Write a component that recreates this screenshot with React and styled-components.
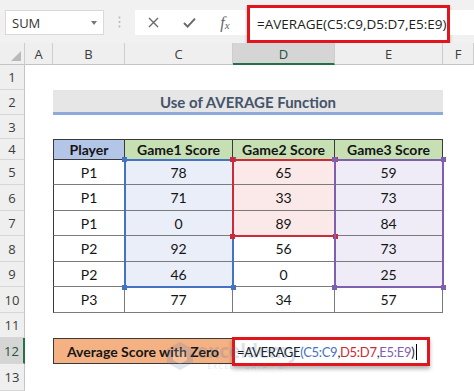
import React from 'react';
import styled, { createGlobalStyle, css } from 'styled-components';

const GlobalStyle = createGlobalStyle`
  html, body { margin: 0; padding: 0; background: #fff; }
  body { width: 474px; height: 391px; overflow: hidden; }
`;

const Window = styled.div`
  width: 474px;
  height: 391px;
  overflow: hidden;
  display: flex;
  flex-direction: column;
  background: #fff;
  font-family: "Open Sans", "Noto Sans", sans-serif;
`;

const Toolbar = styled.div`
  flex: none;
  height: 43px;
  display: flex;
  align-items: flex-start;
  background: #f1f1f1;
`;

const NameBox = styled.div`
  box-sizing: border-box;
  margin: 10px 0 0 5px;
  width: 99px;
  height: 25px;
  background: #fff;
  border: 1px solid #d9d9d9;
  display: flex;
  align-items: center;
  justify-content: space-between;
  padding: 0 6px 0 6px;
  font-size: 13px;
  color: #333;
`;

const Caret = styled.span`
  width: 0;
  height: 0;
  border-left: 3.5px solid transparent;
  border-right: 3.5px solid transparent;
  border-top: 4px solid #777;
`;

const Grip = styled.div`
  width: 31px;
  height: 43px;
  display: flex;
  align-items: center;
  justify-content: center;
`;

const FormulaButtons = styled.div`
  margin-top: 10px;
  width: 112px;
  height: 25px;
  background: #fff;
  display: flex;
`;

const IconSlot = styled.div`
  width: 36px;
  height: 25px;
  display: flex;
  align-items: center;
  justify-content: center;
  color: #6a6a6a;
`;

const Fx = styled.span`
  font-family: "Liberation Serif", "DejaVu Serif", serif;
  font-style: italic;
  font-size: 16px;
  color: #666;
  line-height: 1;
  sub {
    font-size: 11px;
    vertical-align: -1px;
  }
`;

const FormulaInput = styled.div`
  box-sizing: border-box;
  margin-top: 5px;
  width: 203px;
  height: 38px;
  border: 3px solid #e2141c;
  background: #fff;
  box-shadow: 0 2px 3px rgba(0, 0, 0, 0.3);
  display: flex;
  align-items: center;
  padding-left: 7px;
  font-size: 13.5px;
  color: #1d1d1d;
  white-space: nowrap;
`;

const FormulaTail = styled.div`
  flex: 1;
  margin-top: 10px;
  height: 25px;
  background: #fff;
`;

const Sheet = styled.div`
  position: relative;
  flex: 1;
  display: grid;
  grid-template-columns: 25px 28px 72px 108px 102px 108px 1fr;
  grid-template-rows: 22px 25px 25px 24px 21px 25px 26px 25px 26px 25px 26px 25px 26px 27px;
  font-family: Lato, "Open Sans", sans-serif;
`;

const placed = css`
  grid-row: ${(p) => p.$r};
  grid-column: ${(p) => p.$c};
`;

const Corner = styled.div`
  ${placed};
  position: relative;
  background: #efefef;
  border-right: 1px solid #cdcdcd;
  border-bottom: 1px solid #c4c4c4;
  box-sizing: border-box;
  &::after {
    content: '';
    position: absolute;
    right: 3px;
    bottom: 3px;
    width: 0;
    height: 0;
    border-left: 10px solid transparent;
    border-bottom: 10px solid #b9b9b9;
  }
`;

const ColHeader = styled.div`
  ${placed};
  box-sizing: border-box;
  display: flex;
  align-items: center;
  justify-content: center;
  background: ${(p) => (p.$sel ? '#d5d5d5' : '#efefef')};
  border-right: 1px solid #cdcdcd;
  border-bottom: ${(p) => (p.$sel ? '2px solid #217346' : '1px solid #c4c4c4')};
  font-family: "Open Sans", sans-serif;
  font-size: 13px;
  color: ${(p) => (p.$sel ? '#2c4f3b' : '#3c3c3c')};
  padding-top: ${(p) => (p.$sel ? '1px' : '0')};
`;

const RowHeader = styled.div`
  ${placed};
  box-sizing: border-box;
  display: flex;
  align-items: center;
  justify-content: center;
  background: ${(p) => (p.$sel ? '#d5d5d5' : '#efefef')};
  border-right: ${(p) => (p.$sel ? '2px solid #217346' : '1px solid #c4c4c4')};
  border-bottom: 1px solid #d6d6d6;
  font-family: "Open Sans", sans-serif;
  font-size: 13px;
  color: ${(p) => (p.$sel ? '#2c4f3b' : '#3c3c3c')};
`;

const TitleBand = styled.div`
  ${placed};
  box-sizing: border-box;
  display: flex;
  align-items: center;
  justify-content: center;
  background: #e7e6e6;
  border-bottom: 3px solid #8eaadb;
  font-weight: 700;
  font-size: 15px;
  color: #44546a;
  padding-top: 2px;
`;

const TCell = styled.div`
  ${placed};
  box-sizing: border-box;
  display: flex;
  align-items: center;
  justify-content: center;
  background: ${(p) => p.$bg || '#fff'};
  border-right: 1px solid ${(p) => (p.$head ? '#3a3a3a' : '#7a7a7a')};
  border-bottom: 1px solid ${(p) => (p.$head ? '#3a3a3a' : '#7a7a7a')};
  ${(p) => p.$first && css`border-left: 1px solid #3a3a3a;`}
  ${(p) =>
    p.$head &&
    css`
      border-top: 1px solid #3a3a3a;
      font-weight: 700;
    `}
  font-size: 14px;
  color: #141414;
`;

const RangeFrame = styled.div`
  ${placed};
  position: relative;
  margin: -1px -1px -1px -1px;
  border: 2px solid ${(p) => p.$color};
`;

const Handle = styled.span`
  position: absolute;
  width: 5px;
  height: 5px;
  background: ${(p) => p.$color};
  ${(p) => (p.$top ? 'top: -4px;' : 'bottom: -4px;')}
  ${(p) => (p.$left ? 'left: -4px;' : 'right: -4px;')}
`;

const LabelCell = styled.div`
  ${placed};
  box-sizing: border-box;
  display: flex;
  align-items: center;
  justify-content: center;
  background: #f4b183;
  border: 1px solid #3a3a3a;
  font-weight: 700;
  font-size: 14px;
  color: #161616;
`;

const CellEditor = styled.div`
  ${placed};
  position: relative;
  z-index: 2;
  box-sizing: border-box;
  justify-self: start;
  width: 198px;
  margin: -1px 0 -2px -1px;
  border: 3px solid #e2141c;
  background: #fff;
  box-shadow: 0 3px 4px rgba(0, 0, 0, 0.3);
  display: flex;
  align-items: center;
  padding: 1px 0 0 2px;
  font-size: 13px;
  letter-spacing: -0.3px;
  color: #161616;
  white-space: nowrap;
`;

const Ref = styled.span`
  color: ${(p) => p.$color};
`;

const Cursor = styled.span`
  display: inline-block;
  width: 1px;
  height: 16px;
  margin-left: 2px;
  background: #000;
`;

const Watermark = styled.div`
  position: absolute;
  left: 166px;
  top: 298px;
  z-index: 3;
  display: flex;
  align-items: center;
  gap: 3px;
  pointer-events: none;
  opacity: 0.2;
`;

const WatermarkText = styled.div`
  display: flex;
  flex-direction: column;
  align-items: center;
  line-height: 1;
  color: #4a6fa5;
`;

const WatermarkBrand = styled.span`
  font-family: "Open Sans", sans-serif;
  font-weight: 700;
  font-size: 19px;
`;

const WatermarkTag = styled.span`
  font-family: "Open Sans", sans-serif;
  font-size: 7px;
  letter-spacing: 1.5px;
  color: #6b7a90;
  margin-top: 2px;
`;

const columns = ['A', 'B', 'C', 'D', 'E', 'F'];
const rowCount = 13;

const data = [
  ['P1', '78', '65', '59'],
  ['P1', '71', '33', '73'],
  ['P1', '0', '89', '84'],
  ['P2', '92', '56', '73'],
  ['P2', '46', '0', '25'],
  ['P3', '77', '34', '57'],
];

const BLUE = '#4472c4';
const RED = '#cc2a36';
const PURPLE = '#7f5fb0';

function cellBg(rowIdx, colIdx) {
  if (colIdx === 1 && rowIdx <= 4) return '#e9eef8';
  if (colIdx === 2 && rowIdx <= 2) return '#fbe9e9';
  if (colIdx === 3 && rowIdx <= 4) return '#efecf8';
  return '#fff';
}

function Frame({ r, c, color }) {
  return (
    <RangeFrame $r={r} $c={c} $color={color}>
      <Handle $color={color} $top $left />
      <Handle $color={color} $top />
      <Handle $color={color} $left />
      <Handle $color={color} />
    </RangeFrame>
  );
}

export default function App() {
  return (
    <>
      <GlobalStyle />
      <Window>
        <Toolbar>
          <NameBox>
            <span>SUM</span>
            <Caret />
          </NameBox>
          <Grip>
            <svg width="3" height="12" viewBox="0 0 3 12">
              <circle cx="1.5" cy="1.5" r="1" fill="#b5b5b5" />
              <circle cx="1.5" cy="6" r="1" fill="#b5b5b5" />
              <circle cx="1.5" cy="10.5" r="1" fill="#b5b5b5" />
            </svg>
          </Grip>
          <FormulaButtons>
            <IconSlot>
              <svg width="11" height="11" viewBox="0 0 11 11">
                <path d="M1 1 L10 10 M10 1 L1 10" stroke="#6a6a6a" strokeWidth="1.4" fill="none" />
              </svg>
            </IconSlot>
            <IconSlot>
              <svg width="13" height="11" viewBox="0 0 13 11">
                <path d="M1 6 L4.6 9.6 L12 1.6" stroke="#6a6a6a" strokeWidth="2" fill="none" />
              </svg>
            </IconSlot>
            <IconSlot>
              <Fx>
                f<sub>x</sub>
              </Fx>
            </IconSlot>
          </FormulaButtons>
          <FormulaInput>=AVERAGE(C5:C9,D5:D7,E5:E9)</FormulaInput>
          <FormulaTail />
        </Toolbar>

        <Sheet>
          <Corner $r={1} $c={1} />
          {columns.map((col, i) => (
            <ColHeader key={col} $r={1} $c={i + 2} $sel={col === 'D'}>
              {col}
            </ColHeader>
          ))}
          {Array.from({ length: rowCount }, (_, i) => (
            <RowHeader key={i} $r={i + 2} $c={1} $sel={i + 1 === 12}>
              {i + 1}
            </RowHeader>
          ))}

          <TitleBand $r={3} $c="3 / 7">Use of AVERAGE Function</TitleBand>

          <TCell $r={5} $c={3} $head $first $bg="#b4c6e7">Player</TCell>
          <TCell $r={5} $c={4} $head $bg="#c6e0b4">Game1 Score</TCell>
          <TCell $r={5} $c={5} $head $bg="#c6e0b4">Game2 Score</TCell>
          <TCell $r={5} $c={6} $head $bg="#c6e0b4">Game3 Score</TCell>

          {data.map((row, ri) =>
            row.map((v, ci) => (
              <TCell
                key={`${ri}-${ci}`}
                $r={ri + 6}
                $c={ci + 3}
                $first={ci === 0}
                $bg={ci === 0 ? '#fff' : cellBg(ri, ci)}
              >
                {v}
              </TCell>
            ))
          )}

          <Frame r="6 / 11" c={4} color={BLUE} />
          <Frame r="6 / 9" c={5} color={RED} />
          <Frame r="6 / 11" c={6} color={PURPLE} />

          <LabelCell $r={13} $c="3 / 5">Average Score with Zero</LabelCell>
          <CellEditor $r={13} $c="5 / 7">
            =AVERAGE<Ref $color={BLUE}>(C5:C9</Ref>,<Ref $color={RED}>D5:D7</Ref>,
            <Ref $color={PURPLE}>E5:E9</Ref>)<Cursor />
          </CellEditor>

          <Watermark>
            <svg width="28" height="30" viewBox="0 0 28 30">
              <path d="M14 1 L27 8 L27 22 L14 29 L1 22 L1 8 Z" fill="#5b7fb5" />
              <path d="M14 7 L21 11 L21 19 L14 23 L7 19 L7 11 Z" fill="#fff" />
            </svg>
            <WatermarkText>
              <WatermarkBrand>exceldemy</WatermarkBrand>
              <WatermarkTag>EXCEL · DATA · BI</WatermarkTag>
            </WatermarkText>
          </Watermark>
        </Sheet>
      </Window>
    </>
  );
}
